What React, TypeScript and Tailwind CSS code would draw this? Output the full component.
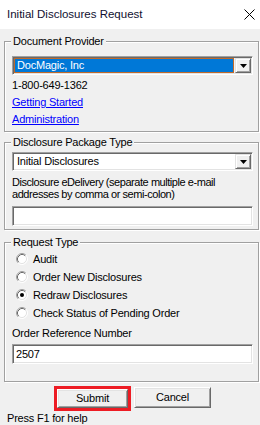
import React from "react";

function Radio({ checked }: { checked?: boolean }) {
  return (
    <svg width="12" height="12" viewBox="0 0 12 12" className="shrink-0">
      <circle cx="6" cy="6" r="5" fill="#ffffff" />
      <path d="M2.11 9.89 A5.5 5.5 0 0 1 9.89 2.11" fill="none" stroke="#a0a0a0" strokeWidth="1" />
      <path d="M9.89 2.11 A5.5 5.5 0 0 1 2.11 9.89" fill="none" stroke="#ffffff" strokeWidth="1" />
      <path d="M2.82 9.18 A4.5 4.5 0 0 1 9.18 2.82" fill="none" stroke="#696969" strokeWidth="1" />
      <path d="M9.18 2.82 A4.5 4.5 0 0 1 2.82 9.18" fill="none" stroke="#e3e3e3" strokeWidth="1" />
      {checked && <circle cx="6" cy="6" r="2" fill="#000000" />}
    </svg>
  );
}

function ComboButton() {
  return (
    <div className="w-[16px] h-full bg-[#f0f0f0] border border-t-[#e3e3e3] border-l-[#e3e3e3] border-r-[#696969] border-b-[#696969] shadow-[inset_1px_1px_0_#ffffff,inset_-1px_-1px_0_#a0a0a0] flex items-center justify-center">
      <svg width="7" height="4" viewBox="0 0 7 4">
        <path d="M0 0 H7 L3.5 4 Z" fill="#000" />
      </svg>
    </div>
  );
}

function RadioRow({ label, checked }: { label: string; checked?: boolean }) {
  return (
    <div className="h-[18px] flex items-center gap-[5px] pl-[4px]">
      <Radio checked={checked} />
      <span className="leading-[13px]">{label}</span>
    </div>
  );
}

export default function App() {
  return (
    <div className="w-[260px] h-[425px] bg-[#f0f0f0] font-['Liberation_Sans',Arial,sans-serif] text-[11px] tracking-[-0.2px] text-black overflow-hidden">
      <div className="h-[29px] bg-white flex items-center justify-between pl-[7px] pr-[5px]">
        <span className="text-[11.5px] tracking-normal text-[#101030] leading-none">Initial Disclosures Request</span>
        <svg width="11" height="11" viewBox="0 0 11 11">
          <path d="M0.5 0.5L10.5 10.5M10.5 0.5L0.5 10.5" stroke="#000" strokeWidth="1" />
        </svg>
      </div>

      <div className="pl-[4px] pr-[1px]">
        {/* Document Provider */}
        <div className="relative mt-[12px] h-[91px] border border-[#a0a0a0] shadow-[inset_1px_1px_0_#ffffff,1px_1px_0_#ffffff] pl-[7px] pr-[5px] pt-[14px]">
          <span className="absolute -top-[7px] left-[6px] bg-[#f0f0f0] px-[2px] leading-[13px]">Document Provider</span>
          <div className="h-[19px] flex border border-t-[#a0a0a0] border-l-[#a0a0a0] border-r-white border-b-white shadow-[inset_1px_1px_0_#696969,inset_-1px_-1px_0_#e3e3e3] p-[1px]">
            <div className="flex-1 flex items-center bg-[#0078d7] border border-[#c06a2b] text-white pl-[2px] leading-none mr-[1px]">
              DocMagic, Inc
            </div>
            <ComboButton />
          </div>
          <div className="mt-[2px] h-[17px] flex items-center">1-800-649-1362</div>
          <div className="h-[17px] flex items-center">
            <span className="text-[#0000ff] underline">Getting Started</span>
          </div>
          <div className="h-[17px] flex items-center">
            <span className="text-[#0000ff] underline">Administration</span>
          </div>
        </div>

        {/* Disclosure Package Type */}
        <div className="relative mt-[10px] h-[88px] border border-[#a0a0a0] shadow-[inset_1px_1px_0_#ffffff,1px_1px_0_#ffffff] pl-[7px] pr-[5px] pt-[9px]">
          <span className="absolute -top-[7px] left-[6px] bg-[#f0f0f0] px-[2px] leading-[13px]">Disclosure Package Type</span>
          <div className="h-[19px] flex bg-white border border-t-[#a0a0a0] border-l-[#a0a0a0] border-r-white border-b-white shadow-[inset_1px_1px_0_#696969,inset_-1px_-1px_0_#e3e3e3] p-[1px]">
            <div className="flex-1 flex items-center pl-[3px] leading-none">Initial Disclosures</div>
            <ComboButton />
          </div>
          <div className="mt-[5px] leading-[12px] tracking-[-0.45px]">
            Disclosure eDelivery (separate multiple e-mail
            <br />
            addresses by comma or semi-colon)
          </div>
          <div className="mt-[6px] h-[20px] bg-white border border-t-[#a0a0a0] border-l-[#a0a0a0] border-r-white border-b-white shadow-[inset_1px_1px_0_#696969,inset_-1px_-1px_0_#e3e3e3]" />
        </div>

        {/* Request Type */}
        <div className="relative mt-[12px] h-[140px] border border-[#a0a0a0] shadow-[inset_1px_1px_0_#ffffff,1px_1px_0_#ffffff] pl-[7px] pr-[5px] pt-[7px]">
          <span className="absolute -top-[7px] left-[6px] bg-[#f0f0f0] px-[2px] leading-[13px]">Request Type</span>
          <RadioRow label="Audit" />
          <RadioRow label="Order New Disclosures" />
          <RadioRow label="Redraw Disclosures" checked />
          <RadioRow label="Check Status of Pending Order" />
          <div className="mt-[5px] leading-[13px]">Order Reference Number</div>
          <div className="mt-[4px] h-[20px] flex items-center pl-[3px] bg-white border border-t-[#a0a0a0] border-l-[#a0a0a0] border-r-white border-b-white shadow-[inset_1px_1px_0_#696969,inset_-1px_-1px_0_#e3e3e3] leading-none">
            2507
          </div>
        </div>
      </div>

      <div className="flex items-start pl-[54px] mt-[4px]">
        <div className="w-[77px] h-[25px] border-[3px] border-[#ed1c24]">
          <div className="w-full h-full flex items-center justify-center bg-[#f0f0f0] border border-t-white border-l-white border-r-[#696969] border-b-[#696969] shadow-[inset_1px_1px_0_#e3e3e3,inset_-1px_-1px_0_#a0a0a0] leading-none">
            Submit
          </div>
        </div>
        <div className="ml-[3px] mt-[1px] w-[77px] h-[21px] flex items-center justify-center bg-[#f0f0f0] border border-t-white border-l-white border-r-[#696969] border-b-[#696969] shadow-[inset_1px_1px_0_#e3e3e3,inset_-1px_-1px_0_#a0a0a0] leading-none">
          Cancel
        </div>
      </div>
      <div className="mt-[1px] pl-[7px] leading-[12px]">Press F1 for help</div>
    </div>
  );
}
